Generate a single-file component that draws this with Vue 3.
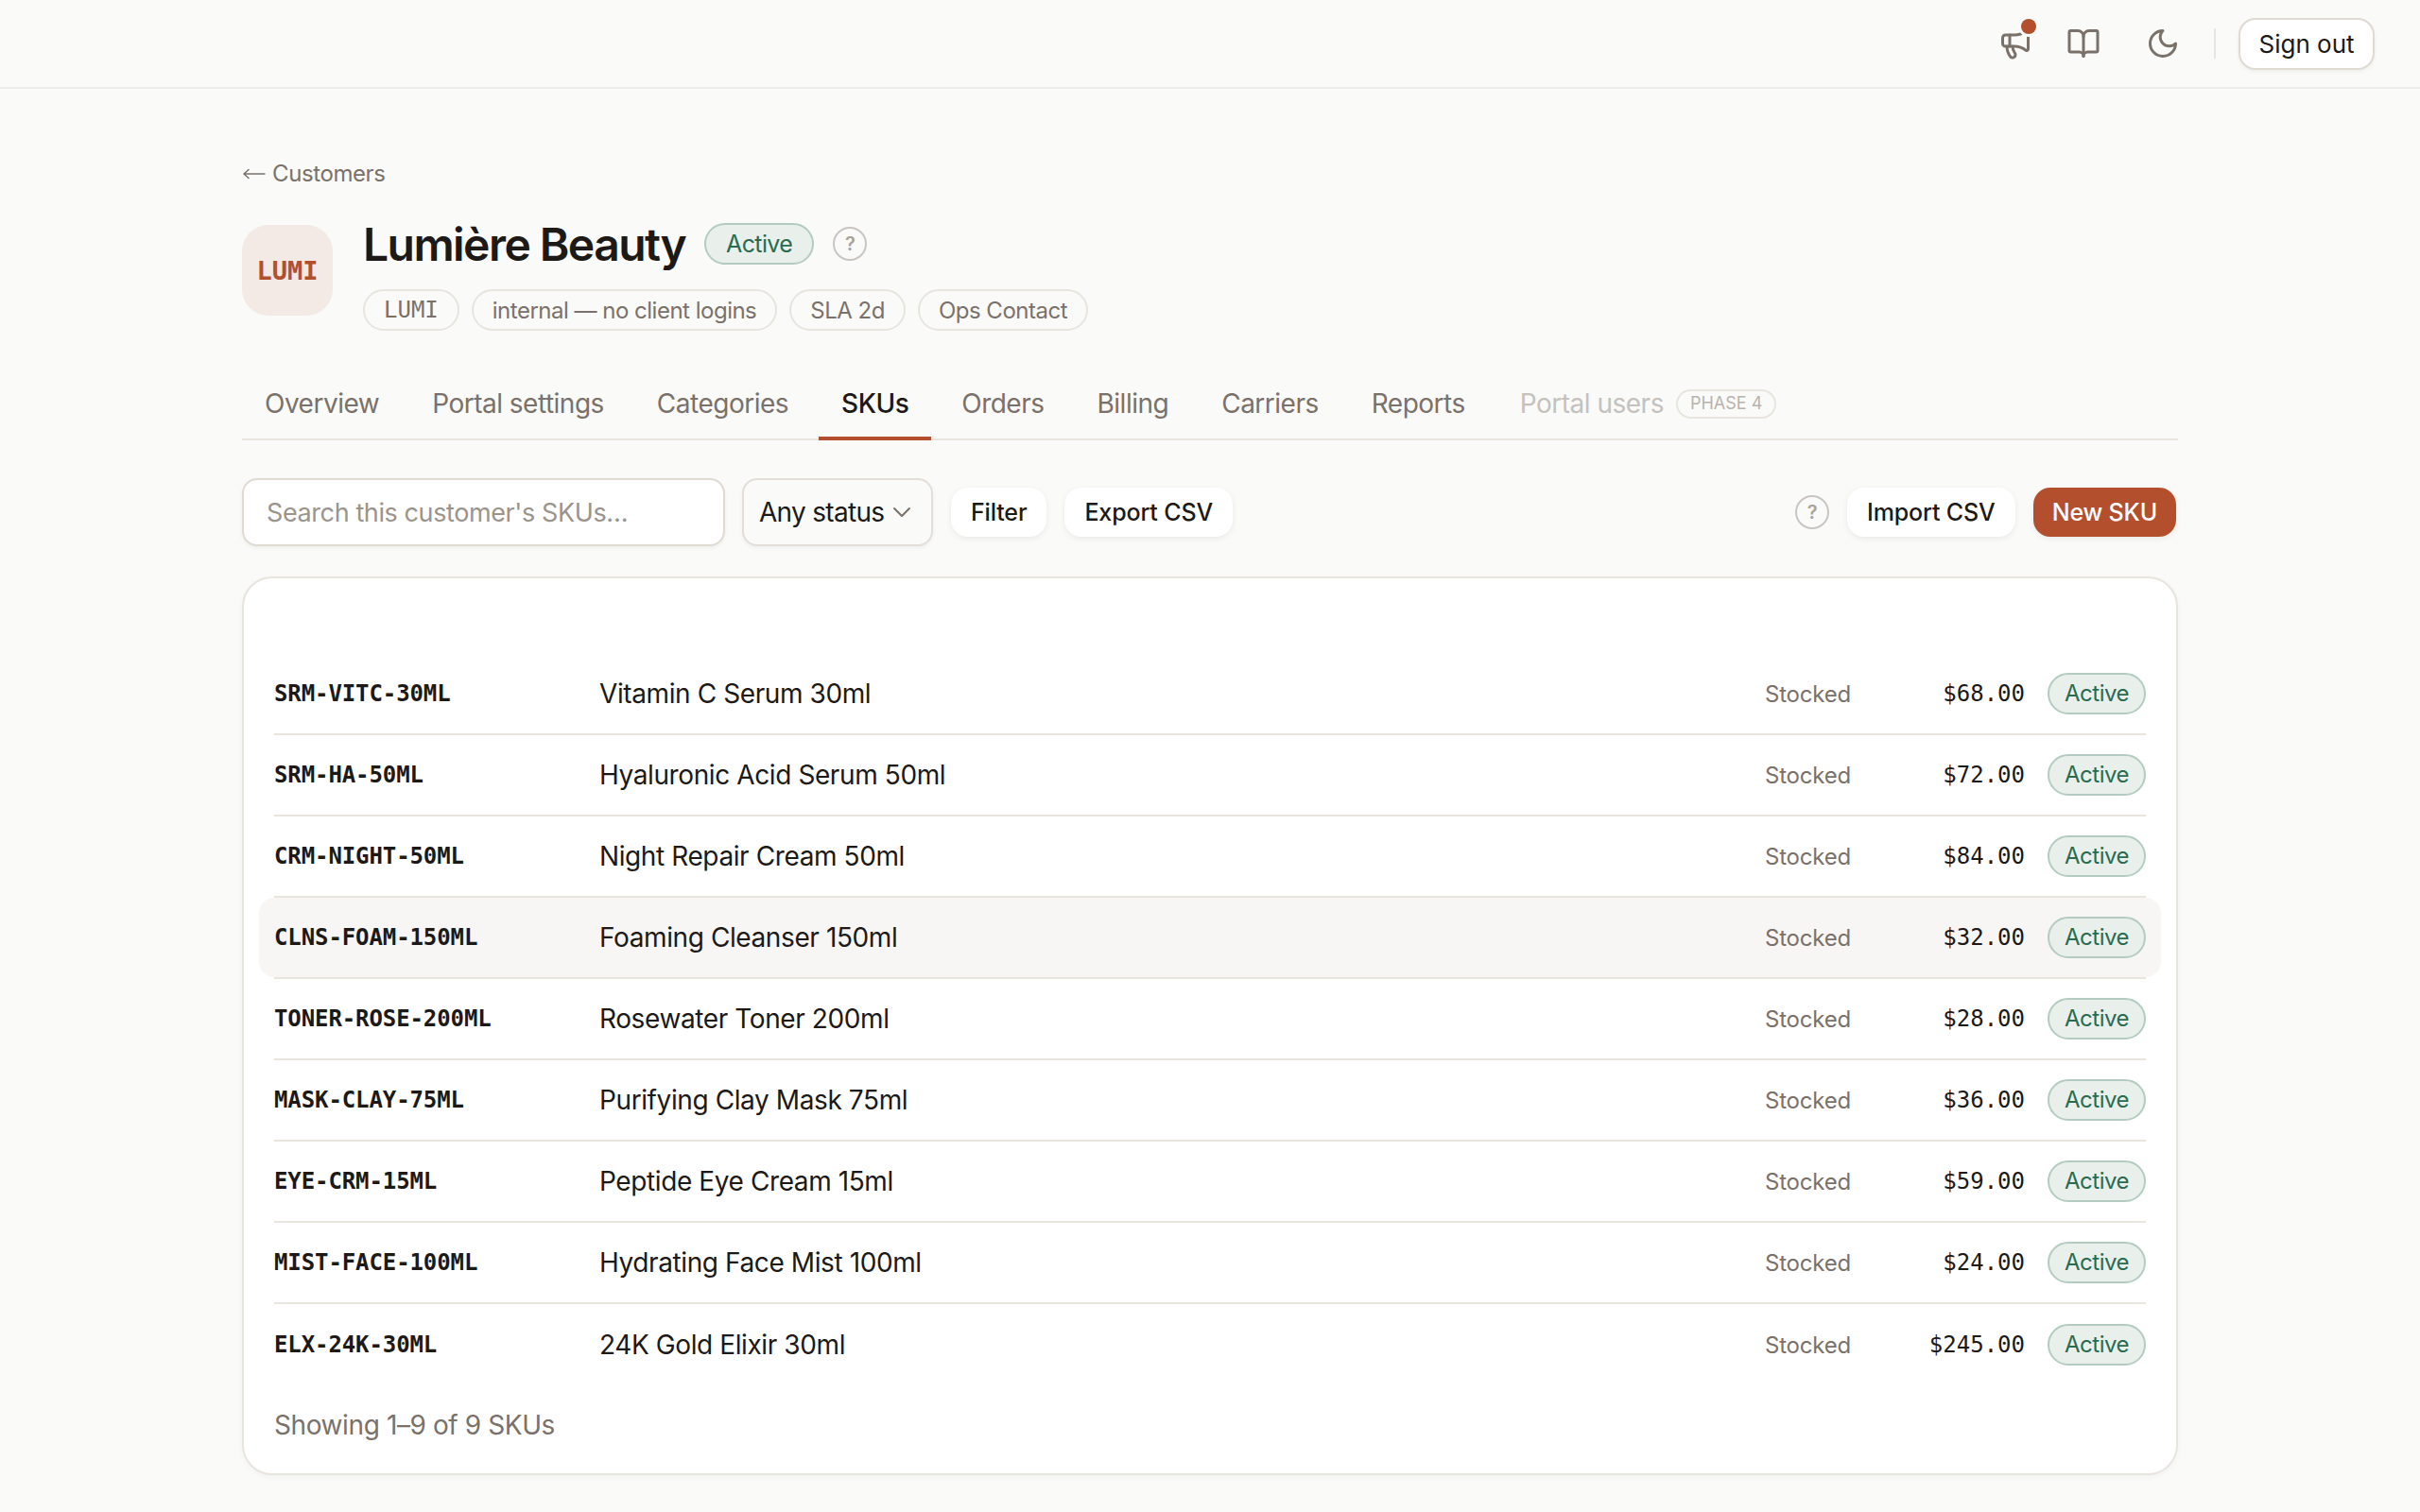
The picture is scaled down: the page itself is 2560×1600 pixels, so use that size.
<script setup>
const tabs = [
  { label: 'Overview' },
  { label: 'Portal settings' },
  { label: 'Categories' },
  { label: 'SKUs', active: true },
  { label: 'Orders' },
  { label: 'Billing' },
  { label: 'Carriers' },
  { label: 'Reports' },
]

const chips = ['internal — no client logins', 'SLA 2d', 'Ops Contact']

const skus = [
  { code: 'SRM-VITC-30ML', name: 'Vitamin C Serum 30ml', price: '$68.00' },
  { code: 'SRM-HA-50ML', name: 'Hyaluronic Acid Serum 50ml', price: '$72.00' },
  { code: 'CRM-NIGHT-50ML', name: 'Night Repair Cream 50ml', price: '$84.00' },
  { code: 'CLNS-FOAM-150ML', name: 'Foaming Cleanser 150ml', price: '$32.00', hover: true },
  { code: 'TONER-ROSE-200ML', name: 'Rosewater Toner 200ml', price: '$28.00' },
  { code: 'MASK-CLAY-75ML', name: 'Purifying Clay Mask 75ml', price: '$36.00' },
  { code: 'EYE-CRM-15ML', name: 'Peptide Eye Cream 15ml', price: '$59.00' },
  { code: 'MIST-FACE-100ML', name: 'Hydrating Face Mist 100ml', price: '$24.00' },
  { code: 'ELX-24K-30ML', name: '24K Gold Elixir 30ml', price: '$245.00' },
]
</script>

<template>
  <div class="app">
    <header class="topbar">
      <button class="icon-btn" aria-label="Announcements">
        <svg width="36" height="36" viewBox="0 0 24 24" fill="none" stroke="currentColor" stroke-width="2" stroke-linecap="round" stroke-linejoin="round">
          <path d="M11 6a13 13 0 0 0 8.400-2.800A1 1 0 0 1 21 4v12a1 1 0 0 1-1.600.800A13 13 0 0 0 11 14H5a2 2 0 0 1-2-2V8a2 2 0 0 1 2-2z" />
          <path d="M6 14a12 12 0 0 0 2.400 7.200 2 2 0 0 0 3.200-2.400A8 8 0 0 1 10 14" />
          <path d="M8 6v8" />
        </svg>
        <span class="dot"></span>
      </button>
      <button class="icon-btn" aria-label="Docs">
        <svg width="36" height="36" viewBox="0 0 24 24" fill="none" stroke="currentColor" stroke-width="2" stroke-linecap="round" stroke-linejoin="round">
          <path d="M12 7v14" />
          <path d="M3 18a1 1 0 0 1-1-1V4a1 1 0 0 1 1-1h5a4 4 0 0 1 4 4 4 4 0 0 1 4-4h5a1 1 0 0 1 1 1v13a1 1 0 0 1-1 1h-6a3 3 0 0 0-3 3 3 3 0 0 0-3-3z" />
        </svg>
      </button>
      <button class="icon-btn moon" aria-label="Theme">
        <svg width="36" height="36" viewBox="0 0 24 24" fill="none" stroke="currentColor" stroke-width="2" stroke-linecap="round" stroke-linejoin="round">
          <path d="M12 3a6 6 0 0 0 9 9 9 9 0 1 1-9-9z" />
        </svg>
      </button>
      <span class="top-sep"></span>
      <button class="signout">Sign out</button>
    </header>

    <main class="page">
      <a class="back">
        <svg width="24" height="12" viewBox="0 0 24 12" fill="none" stroke="currentColor" stroke-width="1.500" stroke-linecap="round" stroke-linejoin="round"><path d="M1 6h22M6 1.500L1 6l5 4.500" /></svg>
        Customers
      </a>

      <section class="head">
        <div class="avatar">LUMI</div>
        <div class="head-main">
          <div class="title-row">
            <h1>Lumière Beauty</h1>
            <span class="pill pill-big">Active</span>
            <span class="help">?</span>
          </div>
          <div class="chips">
            <span class="chip chip-mono">LUMI</span>
            <span v-for="c in chips" :key="c" class="chip">{{ c }}</span>
          </div>
        </div>
      </section>

      <nav class="tabs">
        <a v-for="t in tabs" :key="t.label" class="tab" :class="{ active: t.active }">{{ t.label }}</a>
        <a class="tab disabled">Portal users <span class="phase">PHASE 4</span></a>
      </nav>

      <div class="toolbar">
        <input class="search" placeholder="Search this customer's SKUs…" />
        <div class="select">
          Any status
          <svg width="24" height="24" viewBox="0 0 24 24" fill="none" stroke="#7a716a" stroke-width="2" stroke-linecap="round" stroke-linejoin="round"><path d="M4 8l8 8 8-8" /></svg>
        </div>
        <button class="btn">Filter</button>
        <button class="btn">Export CSV</button>
        <span class="spacer"></span>
        <span class="help">?</span>
        <button class="btn">Import CSV</button>
        <button class="btn primary">New SKU</button>
      </div>

      <section class="card">
        <div class="rows">
          <div v-for="s in skus" :key="s.code" class="row" :class="{ hover: s.hover }">
            <span class="code">{{ s.code }}</span>
            <span class="name">{{ s.name }}</span>
            <span class="stock">Stocked</span>
            <span class="price">{{ s.price }}</span>
            <span class="pill">Active</span>
          </div>
        </div>
        <p class="foot">Showing 1–9 of 9 SKUs</p>
      </section>
    </main>
  </div>
</template>

<style>
html, body {
  margin: 0;
  background: #fafaf8;
}
</style>

<style scoped>
.app {
  min-height: 1600px;
  background: #fafaf8;
  color: #1c1917;
  font-family: Inter, "Liberation Sans", sans-serif;
  letter-spacing: -0.4px;
}

.topbar {
  height: 92px;
  border-bottom: 2px solid #efede8;
  display: flex;
  align-items: center;
  justify-content: flex-end;
  padding: 0 48px;
}

.icon-btn {
  position: relative;
  width: 72px;
  height: 64px;
  display: flex;
  align-items: center;
  justify-content: center;
  background: none;
  border: 0;
  color: #7a716a;
  padding: 0;
}

.icon-btn.moon {
  margin-left: 12px;
}

.dot {
  position: absolute;
  top: 6px;
  left: 42px;
  width: 16px;
  height: 16px;
  border-radius: 50%;
  background: #b34f2d;
  box-shadow: 0 0 0 3px #fafaf8;
}

.top-sep {
  width: 2px;
  height: 32px;
  background: #e8e5df;
  margin: 0 24px 0 18px;
}

.signout {
  width: 144px;
  height: 55px;
  padding: 0;
  border: 2px solid #dfdad2;
  border-radius: 18px;
  background: #fff;
  font: inherit;
  font-size: 26px;
  color: #1c1917;
  box-shadow: 0 2px 4px rgba(0, 0, 0, 0.05);
}

.page {
  padding: 74px 256px 0;
}

.back {
  display: flex;
  align-items: center;
  gap: 7px;
  padding-left: 1px;
  font-size: 24px;
  line-height: 32px;
  color: #7a716a;
}

.head {
  display: flex;
  gap: 32px;
  margin-top: 28px;
}

.avatar {
  width: 96px;
  height: 96px;
  margin-top: 10px;
  border-radius: 28px;
  background: #f3e9e5;
  color: #b34f2d;
  font-family: "DejaVu Sans Mono", monospace;
  font-size: 27px;
  font-weight: 700;
  letter-spacing: 0;
  display: flex;
  align-items: center;
  justify-content: center;
}

.title-row {
  display: flex;
  align-items: center;
  gap: 20px;
  height: 60px;
}

h1 {
  margin: 0;
  font-size: 48px;
  font-weight: 600;
  letter-spacing: -1.550px;
}

.pill {
  display: inline-flex;
  align-items: center;
  justify-content: center;
  width: 104px;
  height: 44px;
  box-sizing: border-box;
  border: 2px solid #b3cbc0;
  border-radius: 22px;
  background: #e9f0ec;
  color: #2a6b50;
  font-size: 24px;
  letter-spacing: -0.5px;
  padding-bottom: 1px;
}

.pill-big {
  width: 116px;
  font-size: 25px;
  letter-spacing: -0.6px;
}

.help {
  width: 36px;
  height: 36px;
  box-sizing: border-box;
  border: 2px solid #c9c6c1;
  border-radius: 50%;
  display: inline-flex;
  align-items: center;
  justify-content: center;
  font-size: 20px;
  font-weight: 600;
  color: #a8a39c;
}

.chips {
  display: flex;
  gap: 13px;
  margin-top: 18px;
}

.chip {
  height: 44px;
  box-sizing: border-box;
  padding: 0 20px;
  border: 2px solid #e8e4de;
  border-radius: 22px;
  display: flex;
  align-items: center;
  font-size: 24px;
  letter-spacing: -0.5px;
  color: #7a716a;
}

.chip-mono {
  font-family: "DejaVu Sans Mono", monospace;
  letter-spacing: 0;
}

.tabs {
  display: flex;
  gap: 8px;
  margin-top: 57px;
  border-bottom: 2px solid #e8e5df;
}

.tab {
  padding: 0 24px 15px;
  font-size: 28px;
  line-height: 40px;
  letter-spacing: -0.500px;
  color: #7a716a;
  margin-bottom: -2px;
  border-bottom: 4px solid transparent;
  display: flex;
  align-items: center;
  gap: 13px;
}

.tab.active {
  color: #1c1917;
  font-weight: 500;
  border-bottom-color: #b34f2d;
}

.tab.disabled {
  color: #c5c1bc;
  margin-left: 2px;
}

.phase {
  height: 31px;
  box-sizing: border-box;
  padding: 0 13px;
  border: 2px solid #e8e5df;
  border-radius: 16px;
  font-size: 18px;
  line-height: 26px;
  letter-spacing: 0;
  color: #b8b3ac;
}

.toolbar {
  display: flex;
  align-items: center;
  gap: 19px;
  margin-top: 40px;
  padding-right: 2px;
}

.search {
  width: 511px;
  height: 72px;
  box-sizing: border-box;
  padding: 0 24px;
  border: 2px solid #dfdad2;
  border-radius: 16px;
  background: #fff;
  font: inherit;
  font-size: 27px;
  letter-spacing: -0.400px;
  outline: none;
  box-shadow: 0 2px 4px rgba(0, 0, 0, 0.05);
}

.search::placeholder {
  color: #9a948d;
}

.select {
  width: 202px;
  height: 72px;
  margin-left: -1px;
  box-sizing: border-box;
  padding: 0 0 0 16px;
  border: 2px solid #e3dfd8;
  border-radius: 16px;
  background: #fafaf8;
  display: flex;
  align-items: center;
  gap: 7px;
  font-size: 28px;
  letter-spacing: -0.7px;
  box-shadow: 0 2px 4px rgba(0, 0, 0, 0.05);
}

.btn {
  height: 52px;
  padding: 0 21px;
  border: 0;
  border-radius: 18px;
  background: #fff;
  font: inherit;
  font-size: 25px;
  font-weight: 500;
  letter-spacing: -0.150px;
  color: #1c1917;
  box-shadow: 0 2px 6px rgba(0, 0, 0, 0.07);
}

.btn.primary {
  padding: 0 20px;
  background: #b34f2d;
  color: #fff;
}

.spacer {
  flex: 1;
}

.card {
  margin-top: 32px;
  box-sizing: border-box;
  height: 951px;
  padding: 80px 32px 0;
  border: 2px solid #e8e4de;
  border-radius: 32px;
  background: #fff;
  box-shadow: 0 2px 6px rgba(0, 0, 0, 0.04);
}

.row {
  position: relative;
  height: 86px;
  box-sizing: border-box;
  border-bottom: 2px solid #e8e5df;
  display: flex;
  align-items: center;
  font-size: 28px;
}

.row:last-child {
  border-bottom: 0;
}

.row.hover::before {
  content: "";
  position: absolute;
  inset: 0 -16px;
  background: #f7f6f4;
  border-radius: 16px;
}

.row > * {
  position: relative;
}

.code {
  width: 344px;
  font-family: "DejaVu Sans Mono", monospace;
  font-weight: 700;
  font-size: 24px;
  letter-spacing: -0.1px;
}

.name {
  flex: 1;
}

.stock {
  color: #7a716a;
  font-size: 24px;
  letter-spacing: -0.2px;
}

.price {
  width: 184px;
  text-align: right;
  font-family: "DejaVu Sans Mono", monospace;
  font-size: 24px;
  letter-spacing: 0;
}

.row .pill {
  margin-left: 24px;
}

.foot {
  margin: 25px 0 0;
  font-size: 28px;
  line-height: 34px;
  color: #7a716a;
}
</style>
